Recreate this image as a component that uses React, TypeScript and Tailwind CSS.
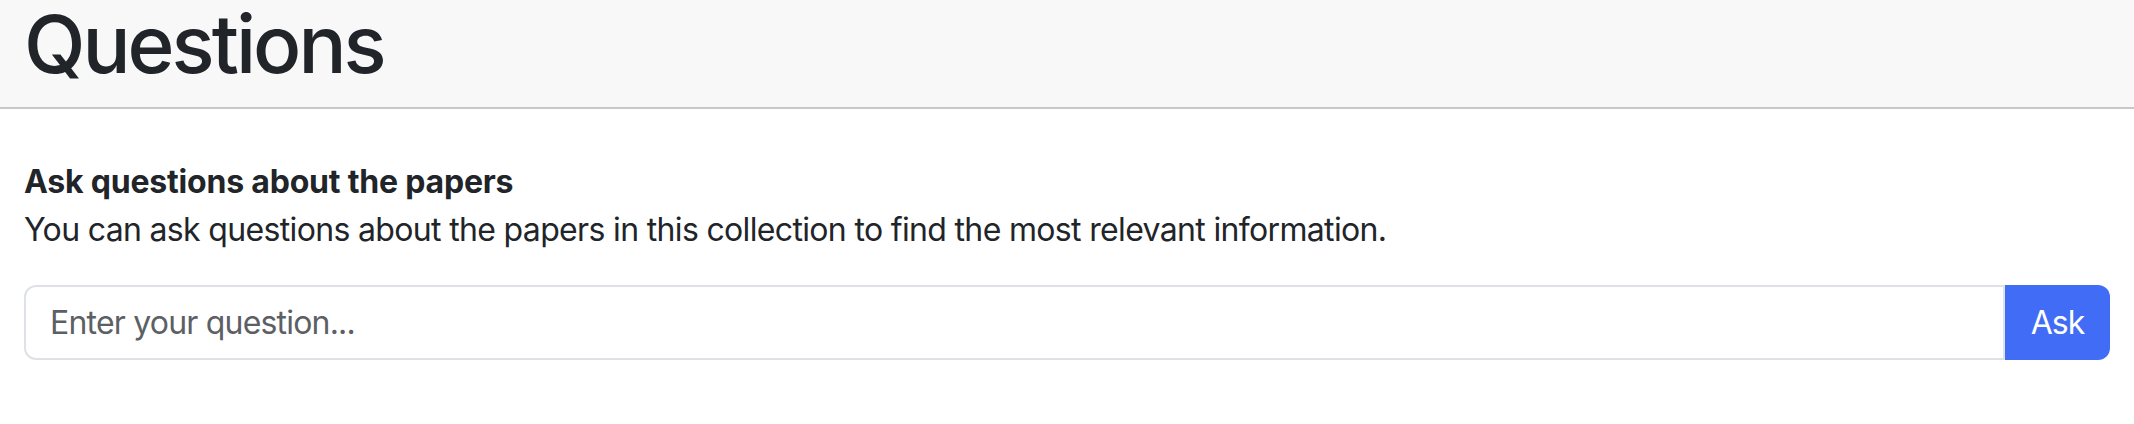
import React from "react";

export default function App() {
  return (
    <div className="w-full min-h-[424px] bg-white text-[#212529]" style={{ fontFamily: "Inter, 'Noto Sans', sans-serif" }}>
      <header className="h-[109px] bg-[#f8f8f8] border-b-2 border-[#c8c8c8] px-[24px]">
        <h1 className="text-[80px] leading-[88px] font-medium tracking-[-3px] text-[#212529]">Questions</h1>
      </header>
      <main className="px-[24px] pt-[48px]">
        <h6 className="text-[32px] leading-[49px] font-bold tracking-[-0.2px]">Ask questions about the papers</h6>
        <p className="text-[32px] leading-[48px] tracking-[-0.66px]">
          You can ask questions about the papers in this collection to find the most relevant information.
        </p>
        <div className="mt-[31px] flex h-[75px]">
          <input
            type="text"
            placeholder="Enter your question..."
            className="flex-1 min-w-0 h-full border-2 border-[#dee2e6] rounded-l-[12px] px-[24px] text-[32px] tracking-[-0.8px] text-[#212529] placeholder:text-[#5c6064] outline-none bg-white"
          />
          <button className="h-full w-[105px] bg-[#406cf6] text-white text-[32px] tracking-[-1px] rounded-r-[12px]">Ask</button>
        </div>
      </main>
    </div>
  );
}
